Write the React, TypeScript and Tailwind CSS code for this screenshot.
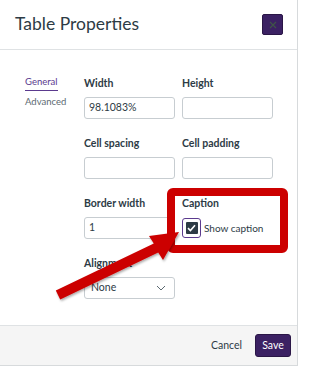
import React from "react";

const font = { fontFamily: "Lato, 'Open Sans', sans-serif" };

function Label({ children }: { children: React.ReactNode }) {
  return <div className="h-[14px] text-[10.5px] font-bold leading-[14px] text-[#2d3b45]">{children}</div>;
}

function TextBox({ value }: { value?: string }) {
  return (
    <div className="flex h-[22px] w-[91px] items-center rounded-[3px] border border-[#c7cdd1] bg-white px-[4px] text-[10.5px] text-[#2d3b45]">
      {value}
    </div>
  );
}

function Field({ label, value }: { label: string; value?: string }) {
  return (
    <div className="flex flex-col gap-[7px]">
      <Label>{label}</Label>
      <TextBox value={value} />
    </div>
  );
}

export default function App() {
  return (
    <div className="relative h-[367px] w-[300px] overflow-hidden bg-white" style={font}>
      <div className="flex h-[366px] w-[298px] flex-col border-r border-b border-[#d7dadc]">
        {/* header */}
        <div className="flex h-[50px] shrink-0 items-center justify-between border-b border-[#dfe2e4] pl-[15px] pr-[14px]">
          <span className="text-[17.5px] text-[#2d3b45]">Table Properties</span>
          <button className="flex h-[21px] w-[21px] items-center justify-center rounded-[2px] border border-[#2a1646] bg-[#3b2163]">
            <svg width="8" height="8" viewBox="0 0 8 8" stroke="#3f5447" strokeWidth="1.2">
              <path d="M1 1l6 6M7 1L1 7" />
            </svg>
          </button>
        </div>

        {/* body */}
        <div className="flex flex-1 items-start pt-[25px]">
          <div className="flex w-[84px] shrink-0 flex-col pl-[25px] text-[9.5px]">
            <span className="w-fit border-b-[1.5px] border-[#5b3a8e] pb-[1px] text-[#5b3a8e]">General</span>
            <span className="mt-[4px] text-[#5d6a72]">Advanced</span>
          </div>
          <div className="grid grid-cols-[91px_91px] content-start gap-x-[7px] gap-y-[17px] pt-[1px]">
            <Field label="Width" value="98.1083%" />
            <Field label="Height" />
            <Field label="Cell spacing" />
            <Field label="Cell padding" />
            <Field label="Border width" value="1" />
            <div className="flex flex-col gap-[7px]">
              <Label>Caption</Label>
              <div className="flex h-[22px] items-center gap-[3px]">
                <div className="flex h-[20px] w-[19px] items-center justify-center rounded-[3px] border-[1.5px] border-[#5b3a8e]">
                  <div className="flex h-[12px] w-[12px] items-center justify-center rounded-[1px] bg-[#2d3b45]">
                    <svg width="9" height="8" viewBox="0 0 9 8" fill="none" stroke="white" strokeWidth="1.6">
                      <path d="M1 4.2l2.4 2.3L8 1.3" />
                    </svg>
                  </div>
                </div>
                <span className="text-[10px] text-[#2d3b45]">Show caption</span>
              </div>
            </div>
            <div className="flex flex-col gap-[7px]">
              <Label>Alignment</Label>
              <div className="flex h-[22px] w-[91px] items-center justify-between rounded-[3px] border border-[#c7cdd1] bg-white pl-[6px] pr-[8px] text-[10.5px] text-[#2d3b45]">
                None
                <svg width="10" height="6" viewBox="0 0 10 6" fill="none" stroke="#5d6a72" strokeWidth="1">
                  <path d="M1 1l4 4 4-4" />
                </svg>
              </div>
            </div>
          </div>
        </div>

        {/* footer */}
        <div className="flex h-[40px] shrink-0 items-center justify-end gap-[13px] border-t border-[#dfe2e4] bg-[#f5f5f5] pr-[6px]">
          <span className="text-[10.5px] text-[#2d3b45]">Cancel</span>
          <button className="h-[23px] w-[36px] rounded-[3px] border border-[#2a1646] bg-[#3b2163] text-[10.5px] text-white">
            Save
          </button>
        </div>
      </div>

      {/* annotation: red highlight box */}
      <div className="pointer-events-none absolute left-[167px] top-[188px] h-[65px] w-[121px] rounded-[6px] border-[8px] border-[#cc0000]" />

      {/* annotation: arrow */}
      <svg className="pointer-events-none absolute inset-0" width="300" height="367" viewBox="0 0 300 367">
        <defs>
          <filter id="sh" x="-10%" y="-10%" width="130%" height="130%">
            <feDropShadow dx="1" dy="1.5" stdDeviation="1.2" floodColor="#000" floodOpacity="0.35" />
          </filter>
        </defs>
        <polygon
          points="55.8,290.5 153.8,243.5 149,236 179,232 163,260 158.2,252.5 60.2,299.5"
          fill="#cc0000"
          filter="url(#sh)"
        />
      </svg>
    </div>
  );
}
